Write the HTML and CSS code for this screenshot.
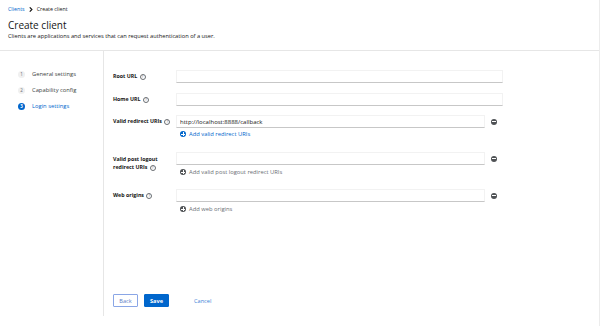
FILE: index.html
```html
<!DOCTYPE html>
<html lang="en">
<head>
    <meta charset="UTF-8">
    <meta name="viewport" content="width=device-width, initial-scale=1.0">
    <title>Create client</title>
    <link rel="stylesheet" href="styles.css">
</head>
<body>

<div class="page">
    <header class="page-header">
        <nav class="breadcrumb">
            <a href="#">Clients</a>
            <svg class="crumb-sep" viewBox="0 0 6 8" width="4" height="5"><path d="M1 0.5 L4.5 4 L1 7.5" fill="none" stroke="#151515" stroke-width="1.8"/></svg>
            <span>Create client</span>
        </nav>
        <h1>Create client</h1>
        <p class="subtitle">Clients are applications and services that can request authentication of a user.</p>
    </header>

    <div class="wizard">
        <!-- Wizard steps -->
        <ol class="steps">
            <li class="step"><span class="step-num">1</span>General settings</li>
            <li class="step"><span class="step-num">2</span>Capability config</li>
            <li class="step active"><span class="step-num">3</span>Login settings</li>
        </ol>

        <div class="wizard-main">
            <form class="form">
                <div class="form-group">
                    <label>Root URL <span class="help">?</span></label>
                    <input type="text" class="input-wide">
                </div>

                <div class="form-group">
                    <label>Home URL <span class="help">?</span></label>
                    <input type="text" class="input-wide">
                </div>

                <div class="form-group multi">
                    <label>Valid redirect URIs <span class="help">?</span></label>
                    <div class="field">
                        <div class="field-row">
                            <input type="text" value="http://localhost:8888/callback">
                            <span class="remove-btn"></span>
                        </div>
                        <a class="add-link" href="#"><span class="add-icon"></span>Add valid redirect URIs</a>
                    </div>
                </div>

                <div class="form-group multi">
                    <label class="two-line">Valid post logout<br>redirect URIs <span class="help">?</span></label>
                    <div class="field">
                        <div class="field-row">
                            <input type="text">
                            <span class="remove-btn"></span>
                        </div>
                        <a class="add-link disabled" href="#"><span class="add-icon"></span>Add valid post logout redirect URIs</a>
                    </div>
                </div>

                <div class="form-group multi">
                    <label>Web origins <span class="help">?</span></label>
                    <div class="field">
                        <div class="field-row">
                            <input type="text">
                            <span class="remove-btn"></span>
                        </div>
                        <a class="add-link disabled" href="#"><span class="add-icon"></span>Add web origins</a>
                    </div>
                </div>
            </form>

            <div class="actions">
                <button class="btn-secondary">Back</button>
                <button class="btn-primary">Save</button>
                <button class="btn-link">Cancel</button>
            </div>
        </div>
    </div>
</div>

</body>
</html>
```

FILE: styles.css
```css
body {
    font-family: 'Open Sans', sans-serif;
    background-color: #fff;
    color: #151515;
    margin: 0;
    padding: 0;
}

.page {
    width: 599px;
    min-height: 326px;
    border-right: 1px solid #ececec;
}

.page-header {
    height: 51px;
    box-sizing: border-box;
    padding: 6px 8px 0;
    border-bottom: 1px solid #e6e6e6;
}

.breadcrumb {
    display: flex;
    align-items: center;
    gap: 3px;
    font-size: 5.3px;
    line-height: 7px;
    color: #151515;
}

.breadcrumb a {
    color: #0066cc;
    text-decoration: none;
    margin-right: 1px;
}

.crumb-sep {
    margin-right: 1px;
}

h1 {
    font-size: 10px;
    font-weight: 400;
    line-height: 12px;
    margin: 6px 0 0;
}

.subtitle {
    font-size: 5.7px;
    line-height: 8px;
    margin: 1px 0 0;
}

.wizard {
    display: flex;
    height: 265px;
}

.steps {
    list-style: none;
    margin: 0;
    padding: 15px 0 0 18px;
    width: 85px;
    border-right: 1px solid #e6e6e6;
}

.step {
    display: flex;
    align-items: center;
    gap: 7px;
    height: 16px;
    font-size: 5.8px;
    color: #3c3f42;
}

.step-num {
    width: 7px;
    height: 7px;
    border-radius: 50%;
    background-color: #f0f0f0;
    color: #6a6e73;
    font-size: 4.5px;
    display: flex;
    align-items: center;
    justify-content: center;
}

.step.active {
    color: #0066cc;
}

.step.active .step-num {
    background-color: #0066cc;
    color: #fff;
    font-weight: 700;
}

.wizard-main {
    flex: 1;
    display: flex;
    flex-direction: column;
    padding: 19px 0 9px 9px;
}

.form-group {
    display: grid;
    grid-template-columns: 63px 1fr;
    margin-bottom: 10px;
}

.form-group:nth-child(2) {
    margin-bottom: 9px;
}

.form-group.multi {
    margin-bottom: 13px;
}

.form-group.multi:nth-child(3) {
    margin-bottom: 14px;
}

label {
    font-size: 5.3px;
    font-weight: 700;
    line-height: 13px;
    color: #151515;
}

label.two-line {
    line-height: 8px;
    padding-top: 3px;
}

.help {
    display: inline-block;
    width: 4px;
    height: 4px;
    border: 0.6px solid #6a6e73;
    border-radius: 50%;
    font-size: 3.6px;
    line-height: 4px;
    text-align: center;
    color: #6a6e73;
    font-weight: 400;
    margin-left: 1px;
    vertical-align: middle;
}

input {
    height: 13px;
    box-sizing: border-box;
    border: 1px solid #f2f2f2;
    border-bottom-color: #c7c7c7;
    padding: 0 3px;
    font-family: 'Open Sans', sans-serif;
    font-size: 6px;
    color: #151515;
    outline: none;
}

.input-wide {
    width: 327px;
}

.field-row {
    display: flex;
    align-items: center;
    gap: 6px;
}

.field-row input {
    width: 309px;
}

.remove-btn {
    width: 6px;
    height: 6px;
    border-radius: 50%;
    background-color: #4f5255;
    position: relative;
}

.remove-btn::after {
    content: "";
    position: absolute;
    left: 1.3px;
    right: 1.3px;
    top: 2.4px;
    height: 1.2px;
    background-color: #fff;
}

.add-link {
    display: flex;
    align-items: center;
    gap: 3px;
    height: 8px;
    margin-top: 2px;
    padding-left: 4px;
    font-size: 5.8px;
    color: #0066cc;
    text-decoration: none;
}

.add-link.disabled {
    margin-top: 3px;
    color: #6a6e73;
}

.add-icon {
    width: 6px;
    height: 6px;
    border-radius: 50%;
    background-color: #0066cc;
    position: relative;
}

.add-link.disabled .add-icon {
    background-color: #4f5255;
}

.add-icon::before,
.add-icon::after {
    content: "";
    position: absolute;
    background-color: #fff;
}

.add-icon::before {
    left: 1.3px;
    right: 1.3px;
    top: 2.5px;
    height: 1px;
}

.add-icon::after {
    top: 1.3px;
    bottom: 1.3px;
    left: 2.5px;
    width: 1px;
}

.actions {
    margin-top: auto;
    display: flex;
    align-items: center;
    gap: 6px;
}

.actions button {
    height: 13px;
    width: 25px;
    padding: 0;
    font-family: 'Open Sans', sans-serif;
    font-size: 5.6px;
    border-radius: 1px;
    cursor: pointer;
}

.btn-secondary {
    background-color: #fff;
    border: 1px solid #8aa6e6;
    color: #5a7cc4;
}

.btn-primary {
    background-color: #0066cc;
    border: 1px solid #0066cc;
    color: #fff;
    font-weight: 700;
}

.btn-link {
    background: none;
    border: none;
    color: #3d7fd6;
    margin-left: 19px;
    text-align: left;
}
```
